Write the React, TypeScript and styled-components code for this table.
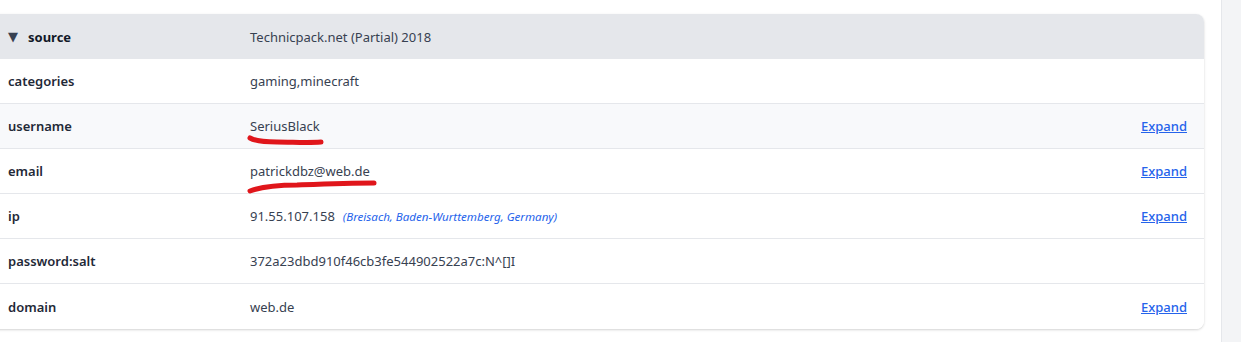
import React from 'react';
import styled, { createGlobalStyle } from 'styled-components';

type Row = {
  key: string;
  value: string;
  location?: string;
  expand?: boolean;
  mark?: 'short' | 'long';
};

const rows: Row[] = [
  { key: 'categories', value: 'gaming,minecraft' },
  { key: 'username', value: 'SeriusBlack', expand: true, mark: 'short' },
  { key: 'email', value: 'patrickdbz@web.de', expand: true, mark: 'long' },
  {
    key: 'ip',
    value: '91.55.107.158',
    location: '(Breisach, Baden-Wurttemberg, Germany)',
    expand: true,
  },
  { key: 'password:salt', value: '372a23dbd910f46cb3fe544902522a7c:N^[]I' },
  { key: 'domain', value: 'web.de', expand: true },
];

/**
 * Hand-drawn red marker strokes under the highlighted values
 */
function Scribble({ kind }: { kind: 'short' | 'long' }) {
  if (kind === 'short') {
    return (
      <Mark width='80' height='14' viewBox='0 0 80 14' style={{ top: 16 }}>
        <path
          d='M3 5 C 8 8, 16 9, 30 9 C 46 9, 60 10, 74 9'
          stroke='#e0161b'
          strokeWidth='5'
          fill='none'
          strokeLinecap='round'
        />
      </Mark>
    );
  }
  return (
    <Mark width='132' height='18' viewBox='0 0 132 18' style={{ top: 15 }}>
      <path
        d='M3 14 C 14 10, 30 8, 50 8 C 76 7, 100 6, 127 6'
        stroke='#e0161b'
        strokeWidth='5'
        fill='none'
        strokeLinecap='round'
      />
    </Mark>
  );
}

function App() {
  return (
    <>
      <GlobalStyle />
      <Page>
        <Main>
          <Card>
            <HeaderRow>
              <Key>
                <Caret>▼</Caret>
                <strong>source</strong>
              </Key>
              <Value>Technicpack.net (Partial) 2018</Value>
              <Action />
            </HeaderRow>
            {rows.map((row, i) => (
              <DataRow key={row.key} $hover={i === 1} $last={i === rows.length - 1}>
                <Key>{row.key}</Key>
                <Value>
                  <ValueText>
                    {row.value}
                    {row.mark && <Scribble kind={row.mark} />}
                  </ValueText>
                  {row.location && <Location>{row.location}</Location>}
                </Value>
                <Action>{row.expand && <Link href='#'>Expand</Link>}</Action>
              </DataRow>
            ))}
          </Card>
        </Main>
        <Scrollbar />
      </Page>
    </>
  );
}

export default App;

const GlobalStyle = createGlobalStyle`
  html, body {
    margin: 0;
    padding: 0;
    background: #fff;
    font-family: 'Noto Sans', 'Open Sans', sans-serif;
    overflow: hidden;
  }
`;

const Page = styled.div`
  display: flex;
  width: 1241px;
  height: 342px;
`;

const Main = styled.main`
  flex: 1;
  padding-top: 14px;
  padding-right: 17px;
`;

const Card = styled.section`
  margin-left: -10px;
  border-radius: 8px;
  overflow: hidden;
  background: #fff;
  box-shadow: 0 1px 3px rgba(0, 0, 0, 0.12), 0 1px 2px rgba(0, 0, 0, 0.06);
`;

const HeaderRow = styled.div`
  display: grid;
  grid-template-columns: 260px 1fr 120px;
  align-items: center;
  height: 45px;
  background: #e5e7eb;
  color: #111827;
  font-size: 13px;
`;

const DataRow = styled.div<{ $hover?: boolean; $last?: boolean }>`
  display: grid;
  grid-template-columns: 260px 1fr 120px;
  align-items: center;
  height: 45px;
  box-sizing: border-box;
  border-bottom: ${(p) => (p.$last ? 'none' : '1px solid #e5e7eb')};
  background: ${(p) => (p.$hover ? '#f8f9fb' : '#fff')};
  font-size: 13px;
`;

const Key = styled.div`
  display: flex;
  align-items: center;
  gap: 10px;
  padding-left: 18px;
  font-weight: 600;
  color: #1f2937;

  strong {
    font-weight: 700;
    color: #111827;
  }
`;

const Caret = styled.span`
  font-family: 'DejaVu Sans', sans-serif;
  font-size: 13px;
  line-height: 1;
  color: #374151;
`;

const Value = styled.div`
  display: flex;
  align-items: baseline;
  gap: 8px;
  color: #374151;
`;

const ValueText = styled.span`
  position: relative;
`;

const Mark = styled.svg`
  position: absolute;
  left: -3px;
`;

const Location = styled.span`
  font-size: 11.6px;
  font-style: italic;
  color: #2563eb;
`;

const Action = styled.div`
  display: flex;
  justify-content: flex-end;
  padding-right: 17px;
`;

const Link = styled.a`
  color: #2563eb;
  text-decoration: underline;
  font-size: 13px;
  font-weight: 500;
`;

const Scrollbar = styled.div`
  width: 19px;
  border-left: 1px solid #e5e7eb;
  background: #f3f4f6;
`;
